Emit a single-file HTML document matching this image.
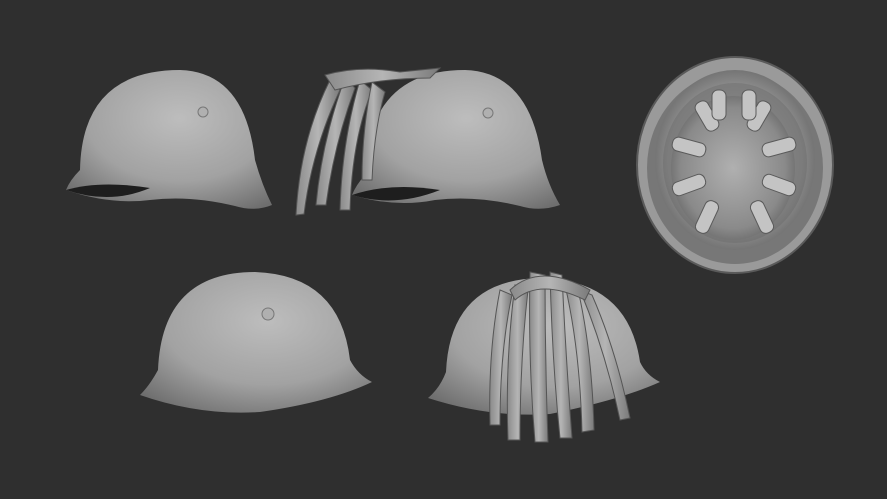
<!DOCTYPE html>
<html><head><meta charset="utf-8"><style>html,body{margin:0;padding:0;background:#2f2f2f;overflow:hidden}svg{display:block}</style></head>
<body>
<svg width="887" height="499" viewBox="0 0 887 499" xmlns="http://www.w3.org/2000/svg">
<defs>
<radialGradient id="g" cx="0.55" cy="0.35" r="0.75">
<stop offset="0" stop-color="#bdbdbd"/><stop offset="0.6" stop-color="#a2a2a2"/><stop offset="1" stop-color="#6e6e6e"/></radialGradient>
<radialGradient id="in" cx="0.5" cy="0.5" r="0.6">
<stop offset="0" stop-color="#b0b0b0"/><stop offset="0.7" stop-color="#8a8a8a"/><stop offset="1" stop-color="#5a5a5a"/></radialGradient>
<linearGradient id="hair" x1="0" y1="0" x2="1" y2="0">
<stop offset="0" stop-color="#8a8a8a"/><stop offset="0.5" stop-color="#b5b5b5"/><stop offset="1" stop-color="#7a7a7a"/></linearGradient>
</defs>
<rect width="887" height="499" fill="#2f2f2f"/>
<!-- helmet 1 -->
<path d="M66 190 Q70 180 80 170 Q82 70 180 70 Q245 72 255 160 Q262 185 272 205 Q255 212 235 206 Q190 195 150 200 Q110 205 66 190Z" fill="url(#g)"/>
<path d="M66 190 Q100 180 150 188 Q110 205 66 190Z" fill="#1e1e1e"/>
<circle cx="203" cy="112" r="5" fill="#b0b0b0" stroke="#777"/>
<!-- helmet 2 -->
<path d="M352 195 Q356 185 365 175 Q368 70 465 70 Q530 72 542 160 Q548 185 560 205 Q540 212 520 206 Q475 195 435 200 Q395 208 352 195Z" fill="url(#g)"/>
<path d="M352 195 Q390 182 440 190 Q395 208 352 195Z" fill="#1e1e1e"/>
<circle cx="488" cy="113" r="5" fill="#b0b0b0" stroke="#777"/>
<g fill="url(#hair)" stroke="#555" stroke-width="1">
<path d="M330 80 Q300 140 296 215 L304 214 Q312 150 340 90Z"/>
<path d="M345 78 Q322 140 316 205 L326 205 Q334 145 355 88Z"/>
<path d="M360 80 Q342 140 340 210 L350 210 Q352 140 372 90Z"/>
<path d="M372 82 Q362 130 362 180 L372 180 Q374 130 385 92Z"/>
<path d="M325 75 Q360 65 400 72 L440 68 L430 78 Q380 78 335 90Z"/>
</g>
<!-- helmet 3 top view -->
<ellipse cx="735" cy="165" rx="98" ry="108" fill="#9a9a9a" stroke="#5a5a5a" stroke-width="2"/>
<ellipse cx="735" cy="168" rx="88" ry="96" fill="#777"/>
<ellipse cx="735" cy="160" rx="80" ry="90" fill="url(#in)"/>
<ellipse cx="735" cy="163" rx="72" ry="80" fill="#666" opacity="0.4"/>
<ellipse cx="733" cy="168" rx="62" ry="72" fill="url(#in)"/>
<g fill="#c4c4c4" stroke="#5a5a5a">
<rect x="700" y="100" width="14" height="32" rx="6" transform="rotate(-30 707 116)"/>
<rect x="752" y="100" width="14" height="32" rx="6" transform="rotate(30 759 116)"/>
<rect x="672" y="140" width="34" height="14" rx="6" transform="rotate(15 689 147)"/>
<rect x="762" y="140" width="34" height="14" rx="6" transform="rotate(-15 779 147)"/>
<rect x="672" y="178" width="34" height="14" rx="6" transform="rotate(-20 689 185)"/>
<rect x="762" y="178" width="34" height="14" rx="6" transform="rotate(20 779 185)"/>
<rect x="700" y="200" width="14" height="34" rx="6" transform="rotate(25 707 217)"/>
<rect x="755" y="200" width="14" height="34" rx="6" transform="rotate(-25 762 217)"/>
<rect x="712" y="90" width="14" height="30" rx="6"/>
<rect x="742" y="90" width="14" height="30" rx="6"/>
</g>
<!-- helmet 4 -->
<path d="M140 395 Q150 385 158 370 Q162 272 255 272 Q340 275 350 360 Q358 375 372 382 Q330 402 260 412 Q200 416 140 395Z" fill="url(#g)"/>
<circle cx="268" cy="314" r="6" fill="#b0b0b0" stroke="#777"/>
<!-- helmet 5 -->
<path d="M428 398 Q440 388 446 372 Q450 280 540 278 Q628 280 640 362 Q646 375 660 382 Q620 400 550 414 Q490 418 428 398Z" fill="url(#g)"/>
<g fill="url(#hair)" stroke="#555" stroke-width="1">
<path d="M500 290 Q488 350 490 425 L500 425 Q500 350 512 295Z"/>
<path d="M515 285 Q505 360 508 440 L520 440 Q520 360 528 290Z"/>
<path d="M530 272 Q528 360 535 442 L548 442 Q545 360 545 275Z"/>
<path d="M550 272 Q552 360 560 438 L572 438 Q566 360 562 275Z"/>
<path d="M565 285 Q580 350 582 432 L594 430 Q592 350 578 290Z"/>
<path d="M580 290 Q605 350 620 420 L630 418 Q616 350 592 295Z"/>
<path d="M510 290 Q540 262 590 290 L585 300 Q540 278 515 300Z"/>
</g>
</svg>
</body></html>
